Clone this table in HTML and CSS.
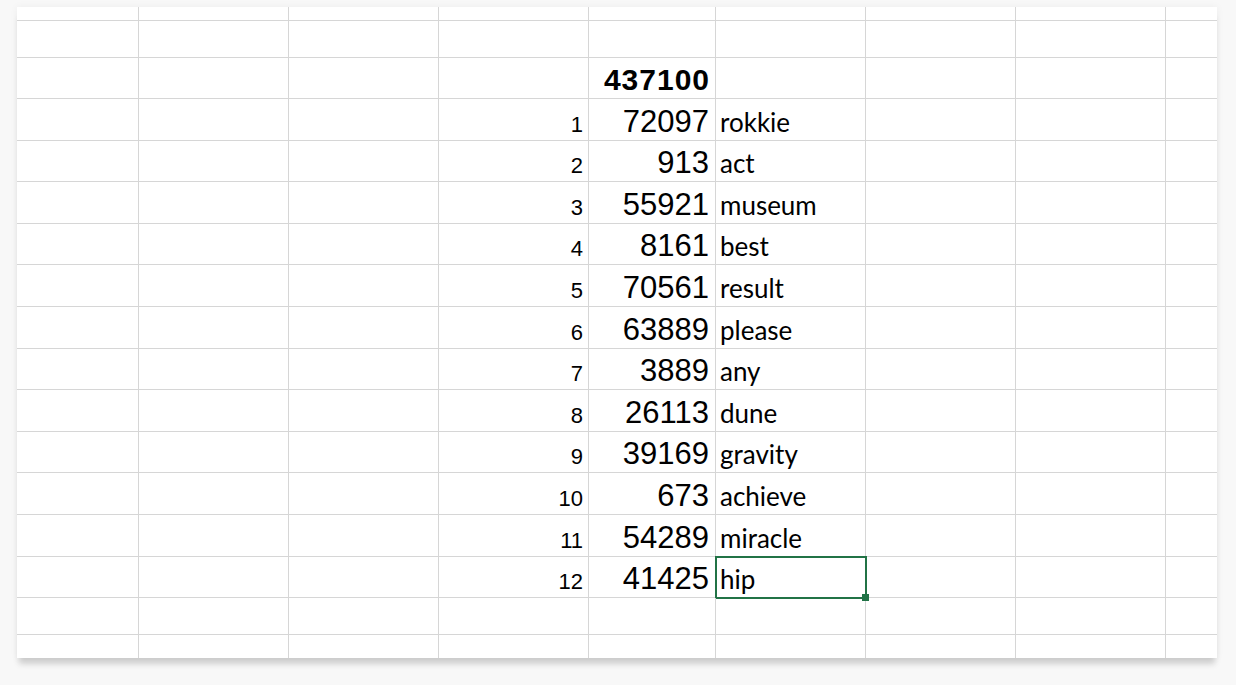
FILE: index.html
```html
<!DOCTYPE html>
<html lang="en">
<head>
    <meta charset="UTF-8">
    <meta name="viewport" content="width=device-width, initial-scale=1.0">
    <title>Sheet</title>
    <link rel="stylesheet" href="styles.css">
</head>
<body>
    <section class="sheet">
      <table class="sheet-table">
        <colgroup>
          <col class="col-a">
          <col class="col-wide">
          <col class="col-wide">
          <col class="col-wide">
          <col class="col-num">
          <col class="col-wide">
          <col class="col-wide">
          <col class="col-wide">
          <col class="col-end">
        </colgroup>
        <tr class="row-top"><td></td><td></td><td></td><td></td><td></td><td></td><td></td><td></td><td></td></tr>
        <tr class="row-short"><td></td><td></td><td></td><td></td><td></td><td></td><td></td><td></td><td></td></tr>
        <tr class="row-a"><td></td><td></td><td></td><td></td><td class="num num-total">437100</td><td></td><td></td><td></td><td></td></tr>
        <tr class="row-b"><td></td><td></td><td></td><td class="idx">1</td><td class="num">72097</td><td class="word">rokkie</td><td></td><td></td><td></td></tr>
        <tr class="row-a"><td></td><td></td><td></td><td class="idx">2</td><td class="num">913</td><td class="word">act</td><td></td><td></td><td></td></tr>
        <tr class="row-b"><td></td><td></td><td></td><td class="idx">3</td><td class="num">55921</td><td class="word">museum</td><td></td><td></td><td></td></tr>
        <tr class="row-a"><td></td><td></td><td></td><td class="idx">4</td><td class="num">8161</td><td class="word">best</td><td></td><td></td><td></td></tr>
        <tr class="row-b"><td></td><td></td><td></td><td class="idx">5</td><td class="num">70561</td><td class="word">result</td><td></td><td></td><td></td></tr>
        <tr class="row-b"><td></td><td></td><td></td><td class="idx">6</td><td class="num">63889</td><td class="word">please</td><td></td><td></td><td></td></tr>
        <tr class="row-a"><td></td><td></td><td></td><td class="idx">7</td><td class="num">3889</td><td class="word">any</td><td></td><td></td><td></td></tr>
        <tr class="row-b"><td></td><td></td><td></td><td class="idx">8</td><td class="num">26113</td><td class="word">dune</td><td></td><td></td><td></td></tr>
        <tr class="row-a"><td></td><td></td><td></td><td class="idx">9</td><td class="num">39169</td><td class="word">gravity</td><td></td><td></td><td></td></tr>
        <tr class="row-b"><td></td><td></td><td></td><td class="idx">10</td><td class="num">673</td><td class="word">achieve</td><td></td><td></td><td></td></tr>
        <tr class="row-b"><td></td><td></td><td></td><td class="idx">11</td><td class="num">54289</td><td class="word">miracle</td><td></td><td></td><td></td></tr>
        <tr class="row-a"><td></td><td></td><td></td><td class="idx">12</td><td class="num">41425</td><td class="word word-active">hip</td><td></td><td></td><td></td></tr>
        <tr class="row-short"><td></td><td></td><td></td><td></td><td></td><td></td><td></td><td></td><td></td></tr>
        <tr class="row-last"><td></td><td></td><td></td><td></td><td></td><td></td><td></td><td></td><td></td></tr>
      </table>
    </section>
</body>
</html>
```

FILE: styles.css
```css
html,
body {
  height: 100%;
}

body {
  margin: 0;
  padding: 7px 0 0 17px;
  box-sizing: border-box;
  background-color: #f8f8f8;
  font-family: "Liberation Sans", Arial, sans-serif;
  color: #000000;
}

.sheet {
  width: 1200px;
  height: 651px;
  overflow: hidden;
  background-color: #ffffff;
  box-shadow: 0 8px 6px -2px rgba(0, 0, 0, 0.16), 0 0 8px rgba(0, 0, 0, 0.05);
}

.sheet-table {
  table-layout: fixed;
  width: 1200px;
  border-collapse: separate;
  border-spacing: 0;
}

.col-a {
  width: 122px;
}

.col-wide {
  width: 150px;
}

.col-num {
  width: 127px;
}

.col-end {
  width: 51px;
}

.sheet-table td {
  position: relative;
  padding: 0;
  border-right: 1px solid #d6d6d6;
  border-bottom: 1px solid #d6d6d6;
  vertical-align: bottom;
  white-space: nowrap;
  line-height: 1;
}

.sheet-table td:last-child {
  border-right: none;
}

.row-top {
  height: 14px;
}

.row-short {
  height: 37px;
}

.row-a {
  height: 41px;
}

.row-b {
  height: 42px;
}

.row-last {
  height: 23px;
}

.row-last td {
  border-bottom: none;
}

.idx {
  padding: 0 5px 4px 0 !important;
  font-size: 22px;
  text-align: right;
}

.num {
  padding: 0 6px 3px 0 !important;
  font-size: 31px;
  text-align: right;
}

.num-total {
  padding-right: 5px !important;
  font-size: 30px;
  font-weight: 700;
  letter-spacing: 1px;
}

.word {
  padding: 0 0 5px 4px !important;
  font-family: "Lato", sans-serif;
  font-size: 26px;
}

.word-active {
  outline: 2px solid #217346;
  outline-offset: -1px;
}

.word-active::after {
  content: "";
  position: absolute;
  z-index: 2;
  right: -4px;
  bottom: -4px;
  width: 7px;
  height: 7px;
  background-color: #217346;
}
```
